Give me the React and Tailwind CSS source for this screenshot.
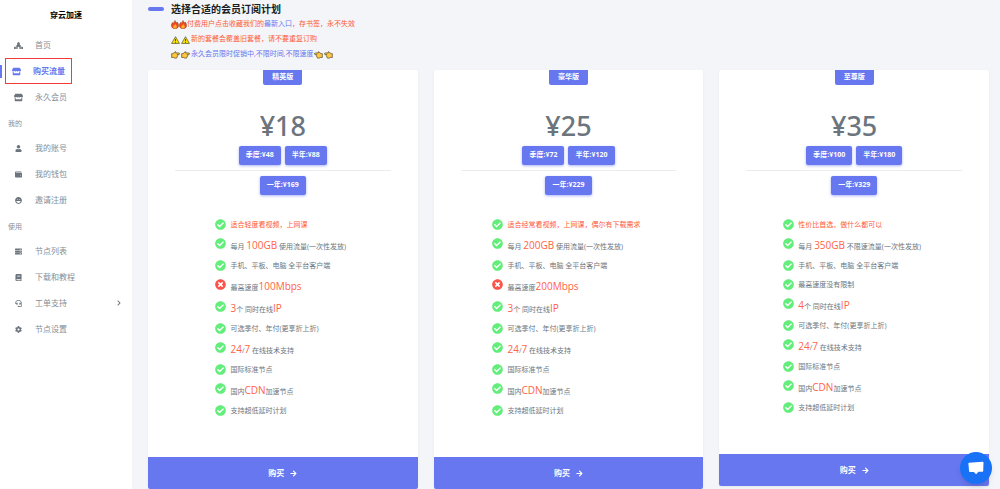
import {
  FaArrowRight,
  FaBook,
  FaCheckCircle,
  FaChevronRight,
  FaCog,
  FaHeadset,
  FaLaugh,
  FaPlaceOfWorship,
  FaServer,
  FaStore,
  FaTimesCircle,
  FaUser,
  FaWallet,
} from 'react-icons/fa';

const menu = [
  {
    title: null,
    items: [
      { label: '首页', icon: FaPlaceOfWorship, wide: true },
      { label: '购买流量', icon: FaStore, active: true },
      { label: '永久会员', icon: FaStore, wide: true },
    ],
  },
  {
    title: '我的',
    items: [
      { label: '我的账号', icon: FaUser },
      { label: '我的钱包', icon: FaWallet },
      { label: '邀请注册', icon: FaLaugh },
    ],
  },
  {
    title: '使用',
    items: [
      { label: '节点列表', icon: FaServer },
      { label: '下载和教程', icon: FaBook },
      { label: '工单支持', icon: FaHeadset, expandable: true },
      { label: '节点设置', icon: FaCog },
    ],
  },
];

function Hot({ children }) {
  return <span className="text-[10px] text-[#ff6347]">{children}</span>;
}

const commonFeatures = [
  { text: '可选季付、年付(更享折上折)' },
  { text: <><Hot>24</Hot>/<Hot>7</Hot> 在线技术支持</>, tall: true },
  { text: '国际标准节点' },
  { text: <>国内<Hot>CDN</Hot>加速节点</>, tall: true },
  { text: '支持超低延时计划' },
];

const plans = [
  {
    name: '精英版',
    price: '¥18',
    quarter: '季度:¥48',
    half: '半年:¥88',
    year: '一年:¥169',
    features: [
      { text: '适合轻度看视频，上网课', highlight: true },
      { text: <>每月 <Hot>100GB</Hot> 使用流量(一次性发放)</>, tall: true },
      { text: '手机、平板、电脑 全平台客户端' },
      { text: <>最高速度<Hot>100Mbps</Hot></>, tall: true, limited: true },
      { text: <><Hot>3</Hot>个 同时在线<Hot>IP</Hot></>, tall: true },
      ...commonFeatures,
    ],
  },
  {
    name: '豪华版',
    price: '¥25',
    quarter: '季度:¥72',
    half: '半年:¥120',
    year: '一年:¥229',
    features: [
      { text: '适合经常看视频，上网课，偶尔有下载需求', highlight: true },
      { text: <>每月 <Hot>200GB</Hot> 使用流量(一次性发放)</>, tall: true },
      { text: '手机、平板、电脑 全平台客户端' },
      { text: <>最高速度<Hot>200Mbps</Hot></>, tall: true, limited: true },
      { text: <><Hot>3</Hot>个 同时在线<Hot>IP</Hot></>, tall: true },
      ...commonFeatures,
    ],
  },
  {
    name: '至尊版',
    price: '¥35',
    quarter: '季度:¥100',
    half: '半年:¥180',
    year: '一年:¥329',
    features: [
      { text: '性价比首选，做什么都可以', highlight: true },
      { text: <>每月 <Hot>350GB</Hot> 不限速流量(一次性发放)</>, tall: true },
      { text: '手机、平板、电脑 全平台客户端' },
      { text: '最高速度没有限制' },
      { text: <><Hot>4</Hot>个 同时在线<Hot>IP</Hot></>, tall: true },
      ...commonFeatures,
    ],
  },
];

function FireIcon() {
  return (
    <svg viewBox="0 0 16 18" className="h-[9px] w-2 shrink-0" aria-hidden="true">
      <path d="M8 .8c.6 2.600 2.200 3.800 3.400 5.400.5-.7.700-1.500.6-2.300 2 2 3.200 4.400 3.200 7 0 4-3 6.500-7.200 6.500S.8 14.900.8 11c0-2.700 1.300-4.600 2.400-6.200.1 1.100.4 1.900 1 2.500C4.700 4.600 7.500 3.700 8 .8z" fill="#f04a1c" stroke="#6a2010" strokeWidth=".8" />
      <path d="M8.200 7.500c.3 2 3.300 3 3.300 6 0 2-1.500 3.300-3.500 3.300s-3.600-1.300-3.600-3.300c0-1.500.8-2.300 1.300-3.200l1 1.200c.3-1.500 1.300-2.300 1.500-4z" fill="#fdb02a" />
    </svg>
  );
}

function WarningIcon() {
  return (
    <svg viewBox="0 0 20 18" className="mr-px h-2 w-[9px] shrink-0" aria-hidden="true">
      <path d="M10 1.500 18.800 16.800H1.200z" fill="#fce100" stroke="#4a4a28" strokeWidth="1.500" strokeLinejoin="round" />
      <path d="M10 6.500v5.200M10 13.300v2" stroke="#222" strokeWidth="1.800" />
    </svg>
  );
}

function HandIcon({ left }) {
  return (
    <svg viewBox="0 0 20 16" className={left ? 'mr-px h-2 w-[9px] shrink-0 -scale-x-100' : 'mr-px h-2 w-[9px] shrink-0'} aria-hidden="true">
      <path
        d="M17.500 3.500h-7.300L11 1.800C11.400.8 10 .2 9.200 1L4.500 5h-3v8.500h4.300c1 1 2.400 1.500 4 1.500h1.700c1.300 0 1.900-1 1.500-2 1.100-.2 1.500-1.200 1-2.200 1-.4 1.300-1.500.6-2.500l-.8-1.300h3.700c2 0 2-3.500 0-3.500z"
        fill="#ffc83d"
        stroke="#33261a"
        strokeWidth="1.300"
        strokeLinejoin="round"
      />
    </svg>
  );
}

function MenuItem({ item }) {
  const Icon = item.icon;

  if (item.active) {
    return (
      <li className="flex h-[26px] items-center">
        <span className="mr-[3px] h-[13px] w-0.5 bg-[#6777ef]" />
        <a
          href="#buy"
          aria-current="page"
          className="flex h-[26px] w-[67px] items-center border border-[#f23c3c] pl-1.5 font-bold text-[#6777ef]"
        >
          <Icon className="mr-3 size-[9px]" />
          {item.label}
        </a>
      </li>
    );
  }

  return (
    <li>
      <a href="#menu" className="flex h-[26px] items-center pr-2.5 pl-3.5 text-[#868e96]">
        <span className="mr-3 flex w-[9px] justify-center text-[#6c757d]">
          <Icon className={item.wide ? 'size-[9px]' : 'size-[7px]'} />
        </span>
        {item.label}
        {item.expandable && <FaChevronRight className="ml-auto size-1.5 text-[#6c757d]" />}
      </a>
    </li>
  );
}

function Sidebar() {
  return (
    <aside className="w-[132px] shrink-0 bg-white text-[8px]">
      <a href="#home" className="flex h-8 items-center justify-center pb-0.5 font-bold text-black">
        穿云加速
      </a>
      <nav>
        {menu.map((group, index) => (
          <div key={index}>
            {group.title && (
              <h2 className="flex h-[25px] items-center pt-1 pl-2 text-[7px] text-[#868e96]">{group.title}</h2>
            )}
            <ul>
              {group.items.map((item) => (
                <MenuItem key={item.label} item={item} />
              ))}
            </ul>
          </div>
        ))}
      </nav>
    </aside>
  );
}

function Intro() {
  return (
    <header className="flex">
      <span className="mt-[7px] mr-[7px] h-1 w-4 rounded-full bg-[#6777ef]" />
      <div className="text-[7px] text-[#ff5a36]">
        <h1 className="h-[17px] text-[10px] leading-[18px] font-bold text-[#191d21]">选择合适的会员订阅计划</h1>
        <p className="flex h-[15px] items-center">
          <FireIcon />
          <FireIcon />
          付费用户点击收藏我们的
          <a href="#entry" className="text-[#6777ef]">最新入口</a>
          ，存书签，永不失效
        </p>
        <p className="flex h-[15px] items-center">
          <WarningIcon />
          <WarningIcon />
          新的套餐会覆盖旧套餐，请不要重复订购
        </p>
        <p className="flex h-[15px] items-center text-[#6777ef]">
          <HandIcon />
          <HandIcon />
          <a href="#lifetime">永久会员限时促销中,不限时间,不限速度</a>
          <HandIcon left />
          <HandIcon left />
        </p>
      </div>
    </header>
  );
}

function PriceButton({ children }) {
  return (
    <button
      type="button"
      className="h-[19px] rounded-xs bg-[#6777ef] px-[7px] text-[7px] font-bold text-white shadow-[0_1px_3px_#acb5f6]"
    >
      {children}
    </button>
  );
}

function Feature({ feature }) {
  return (
    <li className={feature.tall ? 'flex h-[22px] items-start' : 'flex h-[19px] items-start'}>
      {feature.limited ? (
        <FaTimesCircle className="mr-1 size-[11px] shrink-0 text-[#fc544b]" />
      ) : (
        <FaCheckCircle className="mr-1 size-[11px] shrink-0 text-[#63ed7a]" />
      )}
      <span
        className={
          feature.tall
            ? 'leading-[15px]'
            : feature.highlight
              ? 'leading-[11px] text-[#ff5a36]'
              : 'leading-[11px]'
        }
      >
        {feature.text}
      </span>
    </li>
  );
}

function PlanCard({ plan }) {
  return (
    <section className="flex flex-col overflow-hidden rounded-xs bg-white text-center text-[#6c757d] shadow-sm shadow-black/5">
      <h2 className="mx-auto flex h-[15px] items-center rounded-b-xs bg-[#6777ef] px-[9px] text-[7px] font-bold text-white">
        {plan.name}
      </h2>
      <p className="mt-5 h-[41px] font-['Noto_Sans',sans-serif] text-[27px] leading-[41px] font-medium">{plan.price}</p>
      <div className="flex justify-center gap-1">
        <PriceButton>{plan.quarter}</PriceButton>
        <PriceButton>{plan.half}</PriceButton>
      </div>
      <hr className="mx-[27px] my-[5px] border-[#ececee]" />
      <div className="flex justify-center">
        <PriceButton>{plan.year}</PriceButton>
      </div>
      <ul className="mx-auto mt-6 mb-[33px] pr-1 text-left text-[7px]">
        {plan.features.map((feature, index) => (
          <Feature key={index} feature={feature} />
        ))}
      </ul>
      <a href="#checkout" className="flex h-8 items-center justify-center bg-[#6777ef] text-[8px] font-bold text-white">
        购买
        <FaArrowRight className="ml-1.5 size-[7px]" />
      </a>
    </section>
  );
}

function ChatButton() {
  return (
    <button
      type="button"
      aria-label="在线客服"
      className="fixed right-2 bottom-[5px] flex size-8 items-center justify-center rounded-full bg-[#1972f5] shadow-md"
    >
      <svg viewBox="0 0 16 14" className="h-3.5 w-4" aria-hidden="true">
        <path d="M1 1.800 14.800.8c.5 0 .7.300.7.700l-.3 8.500c0 .5-.3.700-.7.700l-4 .1-2.400 2.400-2.300-2.100-4-.2c-.5 0-.7-.3-.7-.7L.4 2.500c0-.4.200-.7.600-.7z" fill="#fff" />
      </svg>
    </button>
  );
}

function App() {
  return (
    <div
      lang="zh-CN"
      className="flex min-h-screen bg-[#f3f5f9] font-['Open_Sans','Noto_Sans_CJK_SC',sans-serif]"
    >
      <Sidebar />
      <main className="min-w-0 flex-1 pr-[11px] pl-4">
        <Intro />
        <div className="mt-2 grid grid-cols-3 items-start gap-4">
          {plans.map((plan) => (
            <PlanCard key={plan.name} plan={plan} />
          ))}
        </div>
      </main>
      <ChatButton />
    </div>
  );
}

export default App;
